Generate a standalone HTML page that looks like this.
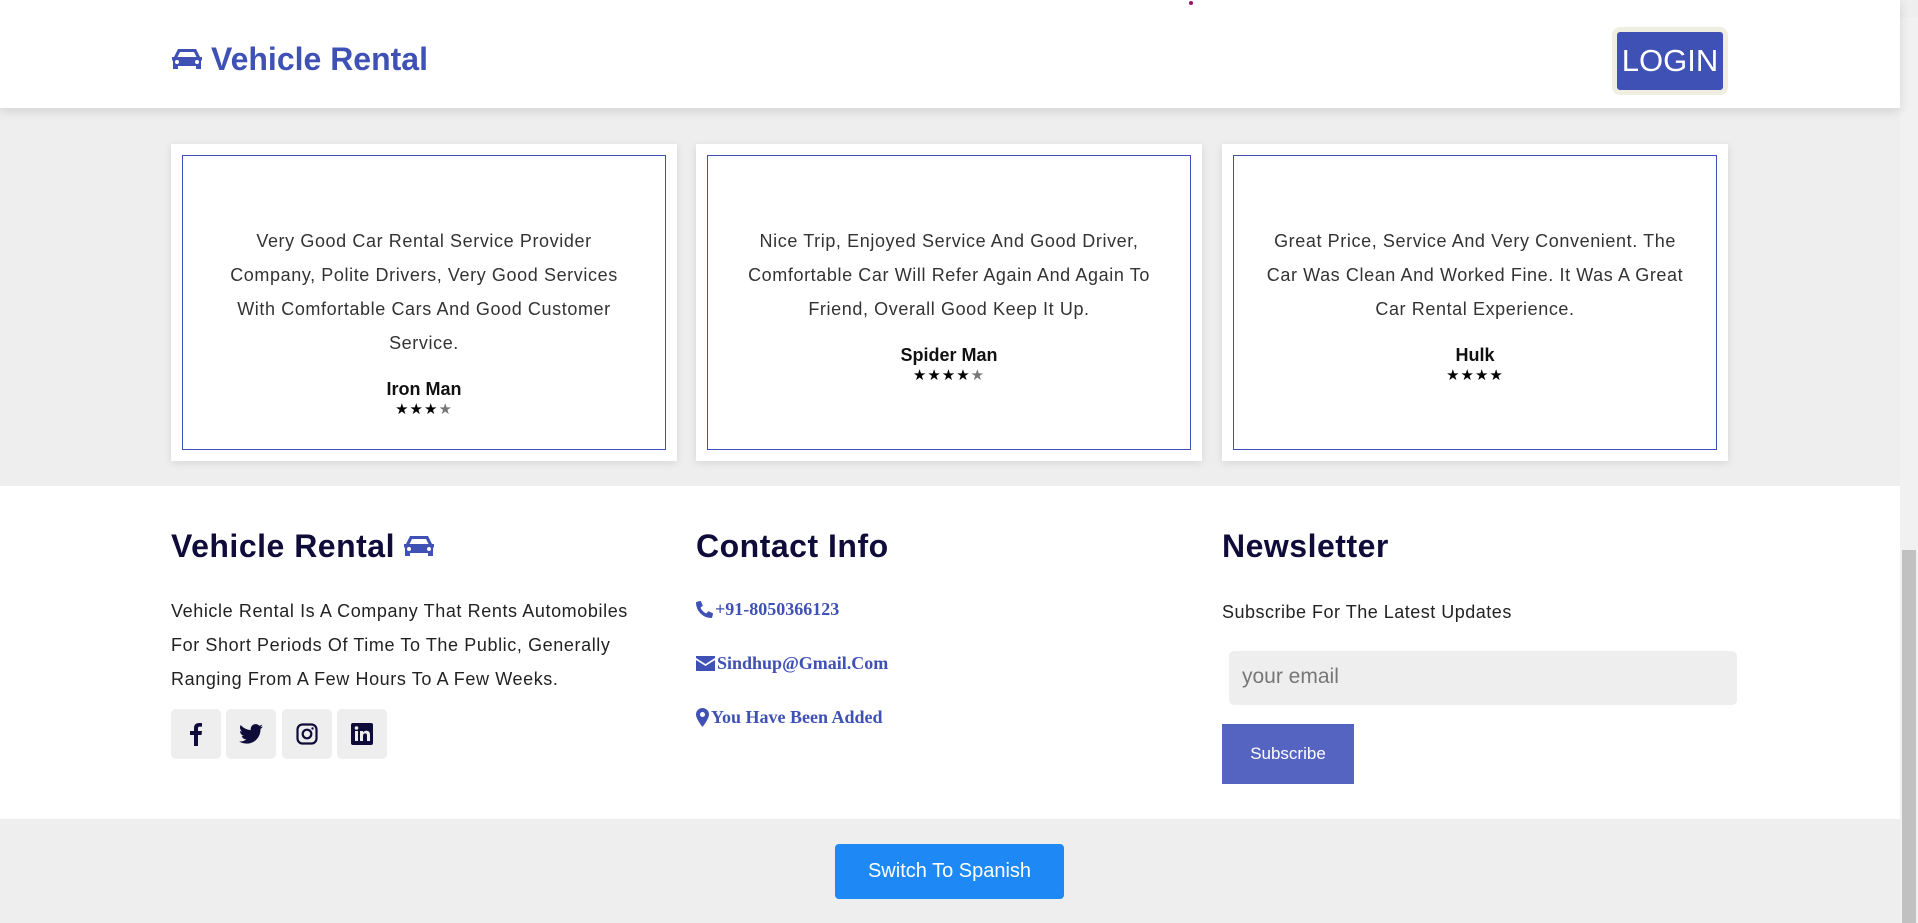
<!DOCTYPE html>
<html><head><meta charset="utf-8"><style>
*{margin:0;padding:0;box-sizing:border-box}
body{width:1918px;height:923px;overflow:hidden;background:#eee;font-family:"Liberation Sans",sans-serif;position:relative}
.hdr{position:absolute;left:0;top:0;width:1900px;height:108px;background:#fff;box-shadow:0 3px 10px rgba(0,0,0,.12);z-index:2}
.logo{position:absolute;left:171px;top:41px;font-size:32px;font-weight:bold;color:#3f51b5;display:flex;align-items:center;gap:8px}
.login{position:absolute;left:1612px;top:27px;width:116px;height:68px;border:5px solid #efeee0;border-radius:8px;background:#3f51b5;color:#fff;font-size:31px;display:flex;align-items:center;justify-content:center}
.sb{position:absolute;left:1900px;top:17px;width:18px;height:906px;background:#f1f1f1}
.sb .th{position:absolute;left:2px;top:533px;width:14px;height:373px;background:#c1c1c1}
.sec{position:absolute;left:0;top:108px;width:1900px;height:378px;background:#eee}
.card{position:absolute;top:144px;width:506px;height:317px;background:#fff;box-shadow:0 2px 8px rgba(0,0,0,.1)}
.card .in{position:absolute;left:11px;top:11px;right:11px;bottom:11px;border:1px solid #3f51b5;text-align:center;padding:0 30px}
.card p{font-size:18px;line-height:34px;color:#333;margin-top:68px;letter-spacing:.6px}
.card h4{font-size:18px;color:#111;margin-top:17px;line-height:24px}
.st{font-size:15px;color:#000;letter-spacing:1px;line-height:18px}
.ft{position:absolute;left:0;top:486px;width:1900px;height:333px;background:#fff}
.ft h2{position:absolute;top:42px;font-size:32px;color:#0f0c3a;display:flex;align-items:center;gap:8px;letter-spacing:.5px}
.pp{position:absolute;left:171px;top:108px;font-size:18px;line-height:34px;color:#222;width:488px;letter-spacing:.6px}
.soc{position:absolute;top:223px;width:50px;height:50px;background:#eee;border-radius:5px;display:flex;align-items:center;justify-content:center}
.cl{position:absolute;left:696px;font-family:"Liberation Serif",serif;font-weight:bold;font-size:18px;color:#3f51b5;display:flex;align-items:center;gap:2px}
.inp{position:absolute;left:1229px;top:165px;width:508px;height:54px;background:#eee;border-radius:5px;font-size:21px;color:#777;padding:14px 13px}
.subs{position:absolute;left:1222px;top:238px;width:132px;height:60px;background:#5563c1;color:#fff;font-size:17px;display:flex;align-items:center;justify-content:center}
.sw{position:absolute;left:835px;top:844px;width:229px;height:55px;background:#1e88f5;border-radius:4px;color:#fff;font-size:20px;display:flex;align-items:center;justify-content:center}
</style></head><body>
<div class="hdr">
<div class="logo"><svg width="32" height="26" viewBox="0 0 32 26"><path fill="#3f51b5" d="M7 2h18l4 8h2v3l-1 1v8h-5v-3H7v3H2v-8l-1-1v-3h2zM9 5l-2.5 5h19L23 5z M6 13a2 2 0 100 4 2 2 0 000-4zm20 0a2 2 0 100 4 2 2 0 000-4z" fill-rule="evenodd"/></svg>Vehicle Rental</div>
<div class="login">LOGIN</div>
<div style="position:absolute;left:1189px;top:1px;width:4px;height:4px;border-radius:50%;background:#a0156a"></div>
</div>
<div class="sb"><div class="th"></div></div>
<div class="sec"></div>
<div class="card" style="left:171px"><div class="in"><p>Very Good Car Rental Service Provider Company, Polite Drivers, Very Good Services With Comfortable Cars And Good Customer Service.</p><h4>Iron Man</h4><div class="st">★★★<span style="color:#777">★</span></div></div></div>
<div class="card" style="left:696px"><div class="in"><p>Nice Trip, Enjoyed Service And Good Driver, Comfortable Car Will Refer Again And Again To Friend, Overall Good Keep It Up.</p><h4>Spider Man</h4><div class="st">★★★★<span style="color:#777">★</span></div></div></div>
<div class="card" style="left:1222px"><div class="in"><p>Great Price, Service And Very Convenient. The Car Was Clean And Worked Fine. It Was A Great Car Rental Experience.</p><h4>Hulk</h4><div class="st">★★★★</div></div></div>
<div class="ft">
<h2 style="left:171px">Vehicle Rental <svg width="32" height="26" viewBox="0 0 32 26"><path fill="#3f51b5" d="M7 2h18l4 8h2v3l-1 1v8h-5v-3H7v3H2v-8l-1-1v-3h2zM9 5l-2.5 5h19L23 5z M6 13a2 2 0 100 4 2 2 0 000-4zm20 0a2 2 0 100 4 2 2 0 000-4z" fill-rule="evenodd"/></svg></h2>
<h2 style="left:696px">Contact Info</h2>
<h2 style="left:1222px">Newsletter</h2>
<div class="pp">Vehicle Rental Is A Company That Rents Automobiles For Short Periods Of Time To The Public, Generally Ranging From A Few Hours To A Few Weeks.</div>
<div class="soc" style="left:171px"><svg width="12" height="24" viewBox="0 0 12 24"><path fill="#0f0c3a" d="M8 24V13h3.5l.5-4H8V6.5C8 5.4 8.4 4.6 10 4.6h2V1.1C11.6 1 10.4 1 9 1 6 1 4 2.8 4 6.1V9H0v4h4v11z"/></svg></div>
<div class="soc" style="left:226px"><svg width="24" height="20" viewBox="0 0 24 20"><path fill="#0f0c3a" d="M24 2.4a9.8 9.8 0 01-2.8.8A4.9 4.9 0 0023.3.5a9.8 9.8 0 01-3.1 1.2A4.9 4.9 0 0011.8 6.1 14 14 0 011.7 1a4.9 4.9 0 001.5 6.6 4.9 4.9 0 01-2.2-.6 4.9 4.9 0 003.9 4.9 4.9 4.9 0 01-2.2.1 4.9 4.9 0 004.6 3.4A9.9 9.9 0 010 17.4 14 14 0 007.5 19.6c9.1 0 14-7.5 14-14v-.6A10 10 0 0024 2.4z"/></svg></div>
<div class="soc" style="left:282px"><svg width="22" height="22" viewBox="0 0 22 22"><rect x="1.5" y="1.5" width="19" height="19" rx="5" fill="none" stroke="#0f0c3a" stroke-width="2.2"/><circle cx="11" cy="11" r="4.3" fill="none" stroke="#0f0c3a" stroke-width="2.2"/><circle cx="16.5" cy="5.5" r="1.2" fill="#0f0c3a"/></svg></div>
<div class="soc" style="left:337px"><svg width="22" height="22" viewBox="0 0 22 22"><rect x="0" y="0" width="22" height="22" rx="2" fill="#0f0c3a"/><rect x="4" y="8" width="3" height="10" fill="#eee"/><circle cx="5.5" cy="5" r="1.8" fill="#eee"/><path fill="#eee" d="M9 8h3v1.5c.6-1 1.8-1.8 3.4-1.8 2.6 0 3.6 1.6 3.6 4.3V18h-3v-5.3c0-1.4-.4-2.3-1.7-2.3S12 11.4 12 12.8V18H9z"/></svg></div>
<div class="cl" style="top:113px"><svg width="17" height="17" viewBox="0 0 16 16"><path fill="#3f51b5" d="M15.5 11.3l-3.4-1.5a.8.8 0 00-.9.2l-1.5 1.8A11.6 11.6 0 014.2 6.3L6 4.8a.7.7 0 00.2-.9L4.7.5A.8.8 0 003.8 0L.6.8A.8.8 0 000 1.5 14.5 14.5 0 0014.5 16a.8.8 0 00.7-.6l.8-3.2a.8.8 0 00-.5-.9z"/></svg>+91-8050366123</div>
<div class="cl" style="top:167px"><svg width="19" height="15" viewBox="0 0 19 15"><path fill="#3f51b5" d="M0 0h19v2L9.5 8 0 2zM0 4l9.5 6L19 4v11H0z"/></svg>Sindhup@Gmail.Com</div>
<div class="cl" style="top:221px"><svg width="13" height="19" viewBox="0 0 13 19"><path fill="#3f51b5" d="M6.5 0A6.5 6.5 0 000 6.5C0 11 6.5 19 6.5 19S13 11 13 6.5A6.5 6.5 0 006.5 0zm0 9a2.5 2.5 0 110-5 2.5 2.5 0 010 5z"/></svg>You Have Been Added</div>
<div style="position:absolute;left:1222px;top:116px;font-size:18px;color:#222;letter-spacing:.5px">Subscribe For The Latest Updates</div>
<div class="inp">your email</div>
<div class="subs">Subscribe</div>
</div>
<div class="sw">Switch To Spanish</div>
</body></html>
